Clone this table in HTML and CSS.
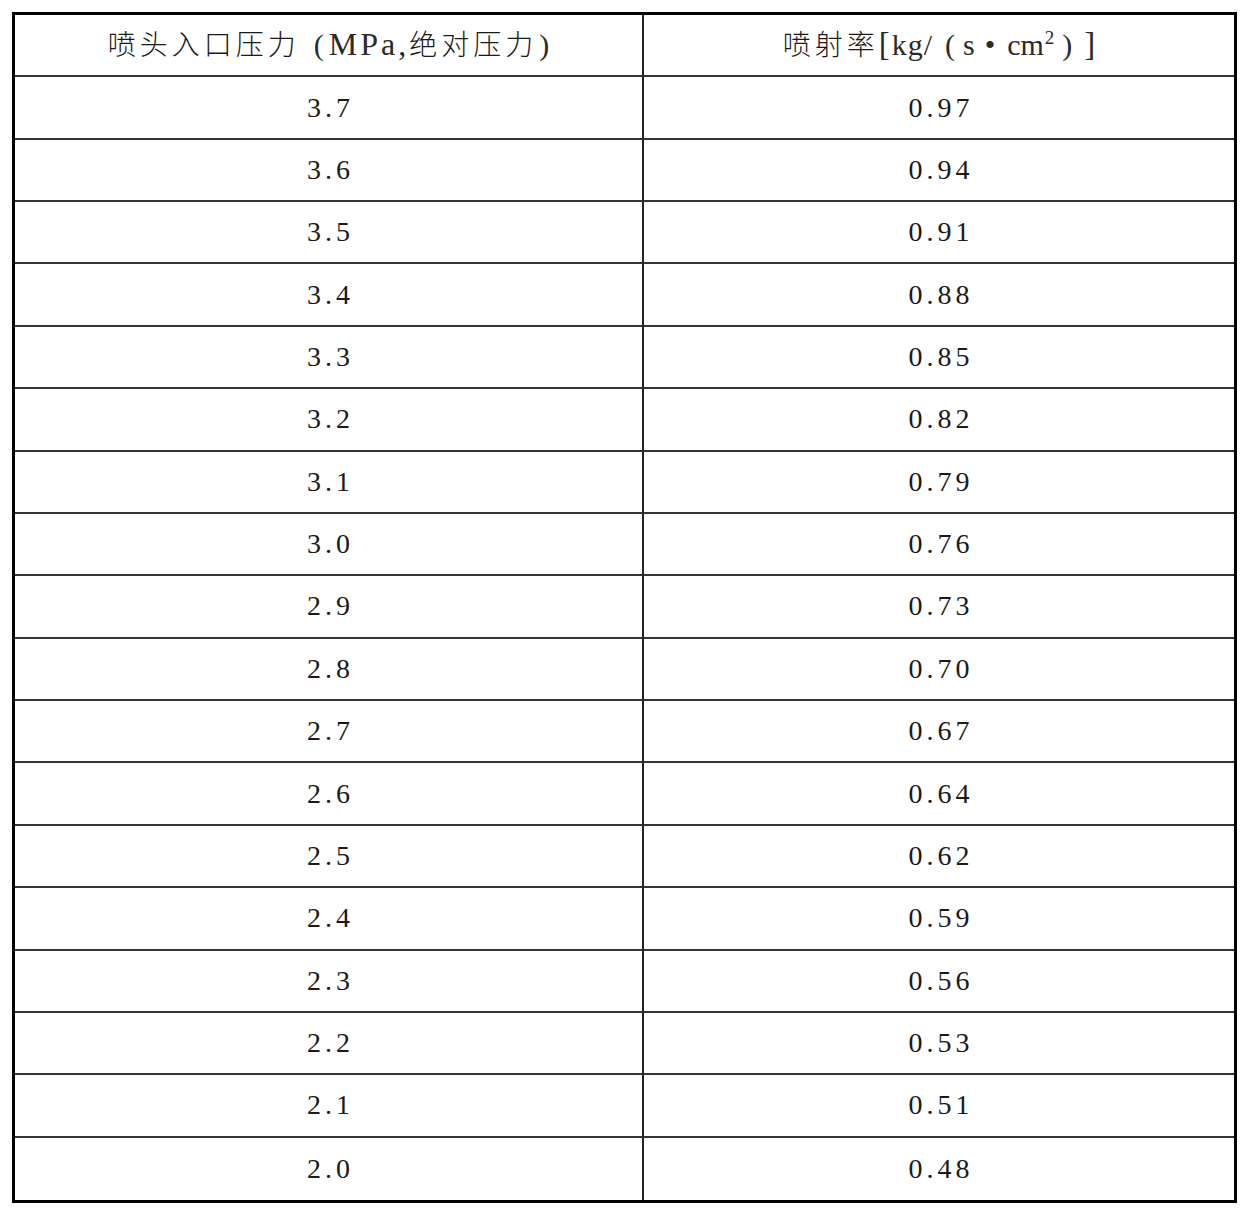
FILE: index.html
```html
<!DOCTYPE html>
<html>
<head>
<meta charset="utf-8">
<link rel="stylesheet" href="styles.css">
</head>
<body>
<div class="table">
  <div class="cell head"><span class="line"><span class="cjk">喷头入口压力</span><span class="lat lp1">(</span><span class="lat mpa">MPa,</span><span class="cjk">绝对压力</span><span class="lat rp1">)</span></span></div>
  <div class="cell head"><span class="line"><span class="cjk">喷射率</span><span class="lat br br1">[</span><span class="lat kg">kg/</span><span class="lat lp2">(</span><span class="lat">s</span><span class="lat bul">•</span><span class="lat">cm<sup>2</sup></span><span class="lat rp2">)</span><span class="lat br br2">]</span></span></div>
  <div class="cell num">3.7</div><div class="cell num">0.97</div>
  <div class="cell num">3.6</div><div class="cell num">0.94</div>
  <div class="cell num">3.5</div><div class="cell num">0.91</div>
  <div class="cell num">3.4</div><div class="cell num">0.88</div>
  <div class="cell num">3.3</div><div class="cell num">0.85</div>
  <div class="cell num">3.2</div><div class="cell num">0.82</div>
  <div class="cell num">3.1</div><div class="cell num">0.79</div>
  <div class="cell num">3.0</div><div class="cell num">0.76</div>
  <div class="cell num">2.9</div><div class="cell num">0.73</div>
  <div class="cell num">2.8</div><div class="cell num">0.70</div>
  <div class="cell num">2.7</div><div class="cell num">0.67</div>
  <div class="cell num">2.6</div><div class="cell num">0.64</div>
  <div class="cell num">2.5</div><div class="cell num">0.62</div>
  <div class="cell num">2.4</div><div class="cell num">0.59</div>
  <div class="cell num">2.3</div><div class="cell num">0.56</div>
  <div class="cell num">2.2</div><div class="cell num">0.53</div>
  <div class="cell num">2.1</div><div class="cell num">0.51</div>
  <div class="cell num last">2.0</div><div class="cell num last">0.48</div>
</div>
</body>
</html>
```
FILE: styles.css
```css
html, body {
  margin: 0;
  padding: 0;
  background: #fff;
}
body {
  padding: 12px;
  font-family: "Liberation Serif", "DejaVu Serif", serif;
  color: #1a1a1a;
}
.table {
  box-sizing: border-box;
  width: 1225px;
  height: 1191px;
  border: 3px solid #000;
  display: grid;
  grid-template-columns: 629px 1fr;
  grid-template-rows: repeat(19, 1fr);
}
.cell {
  box-sizing: border-box;
  display: flex;
  align-items: center;
  justify-content: center;
  border-bottom: 2px solid #333;
}
.cell:nth-child(odd) {
  border-right: 2px solid #222;
}
.cell.last {
  border-bottom: none;
}
.line {
  white-space: nowrap;
  line-height: 1;
  padding-bottom: 2px;
}
.cjk {
  font-family: "Noto Sans CJK SC", sans-serif;
  font-weight: 300;
  font-size: 28px;
  letter-spacing: 4px;
}
.lat {
  font-family: "Liberation Serif", "DejaVu Serif", serif;
  font-size: 30px;
  color: #2a2a2a;
}
.lp1 {
  margin-left: 14px;
  margin-right: 5px;
}
.mpa {
  font-size: 32px;
  letter-spacing: 3px;
}
.rp1 {
  margin-left: 2px;
}
.br {
  font-size: 33px;
}
.br1 {
  margin-left: 0;
  margin-right: 2px;
}
.kg {
  letter-spacing: 1px;
}
.lp2 {
  margin-left: 12px;
  margin-right: 8px;
}
.bul {
  margin-left: 10px;
  margin-right: 12px;
}
.rp2 {
  margin-left: 8px;
}
.br2 {
  margin-left: 12px;
}
.head sup {
  font-size: 19px;
  margin-left: 1px;
  vertical-align: 11px;
  line-height: 0;
}
.num {
  font-family: "Liberation Serif", "DejaVu Serif", serif;
  font-size: 28px;
  letter-spacing: 4px;
  padding-left: 4px;
}
```
